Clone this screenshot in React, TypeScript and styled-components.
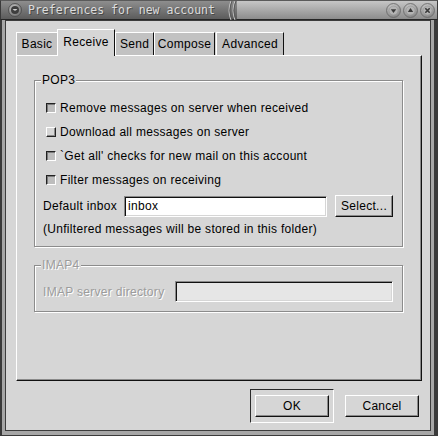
import React from 'react';
import styled, { createGlobalStyle } from 'styled-components';

const Global = createGlobalStyle`
  html, body { margin: 0; padding: 0; background: #d6d6d6; }
  body { font-family: "Liberation Sans", Arial, sans-serif; font-size: 12px; letter-spacing: 0.3px; color: #000; }
  * { box-sizing: border-box; }
`;

const Window = styled.div`
  width: 438px;
  height: 436px;
  display: flex;
  flex-direction: column;
  background: #a6a6a6;
`;

const TitleBar = styled.div`
  height: 20px;
  flex: none;
  display: flex;
  align-items: stretch;
  background: linear-gradient(#c6c6c6, #8c8c8c);
  border-top: 1px solid #5a5a5a;
  border-left: 1px solid #3a3a3a;
  border-right: 1px solid #3a3a3a;
  border-bottom: 1px solid #262626;
`;

const TitleTab = styled.div`
  width: 236px;
  flex: none;
  display: flex;
  align-items: center;
  gap: 6px;
  padding-left: 7px;
  background: linear-gradient(#8e8e8e, #5c5c5c);
`;

const TitleText = styled.span`
  flex: 1;
  font-family: "DejaVu Sans Mono", monospace;
  font-size: 11.5px;
  letter-spacing: 0;
  color: #dcdcdc;
  white-space: nowrap;
  text-shadow: 1px 1px 0 #4a4a4a;
`;

const TitleFill = styled.div`
  flex: 1;
`;

const TitleButtons = styled.div`
  display: flex;
  align-items: center;
  gap: 2px;
  padding-right: 2px;
`;

const Frame = styled.div`
  flex: 1;
  display: flex;
  flex-direction: column;
  border-left: 2px solid #3a3a3a;
  border-right: 4px solid #3a3a3a;
  border-bottom: 1px solid #3a3a3a;
  padding: 0 3px 4px 3px;
`;

const Content = styled.div`
  flex: 1;
  display: flex;
  flex-direction: column;
  background: #d6d6d6;
  border: 1px solid #3c3c3c;
  padding: 8px 8px 7px 10px;
`;

const Notebook = styled.div`
  height: 352px;
  display: flex;
  flex-direction: column;
`;

const TabRow = styled.div`
  height: 26px;
  display: flex;
  align-items: flex-end;
  position: relative;
  z-index: 1;
`;

const Tab = styled.div<{ $active?: boolean; $w: number; $gap?: number; $noRight?: boolean }>`
  width: ${p => p.$w}px;
  margin-left: ${p => p.$gap ?? 0}px;
  height: ${p => (p.$active ? 27 : 23)}px;
  margin-bottom: ${p => (p.$active ? -1 : 0)}px;
  display: flex;
  align-items: center;
  justify-content: center;
  padding-bottom: ${p => (p.$active ? 3 : 1)}px;
  background: ${p => (p.$active ? '#d6d6d6' : '#c2c2c2')};
  border-top: 1px solid #fff;
  border-left: 1px solid #fff;
  border-right: ${p => (p.$noRight ? 'none' : '1px solid #111')};
  white-space: nowrap;
`;

const Panel = styled.div`
  flex: 1;
  display: flex;
  flex-direction: column;
  border-top: 1px solid #fff;
  border-left: 1px solid #fff;
  border-right: 1px solid #111;
  border-bottom: 1px solid #111;
  box-shadow: inset -1px -1px 0 #8a8a8a;
  padding: 24px 18px 0 17px;
`;

const Group = styled.div<{ $h: number; $mt?: number }>`
  position: relative;
  height: ${p => p.$h}px;
  margin-top: ${p => p.$mt ?? 0}px;
  border: 1px solid #8c8c8c;
  box-shadow: inset 1px 1px 0 #fff, 1px 1px 0 #fff;
  display: flex;
  flex-direction: column;
  padding: 15px 0 0 0;
`;

const GroupLabel = styled.span<{ $disabled?: boolean }>`
  position: absolute;
  left: 6px;
  top: -8px;
  line-height: 14px;
  padding: 0 1px;
  background: #d6d6d6;
  color: ${p => (p.$disabled ? '#9c9c9c' : '#000')};
  text-shadow: ${p => (p.$disabled ? '1px 1px 0 #fff' : 'none')};
`;

const CheckRow = styled.label`
  height: 24px;
  display: flex;
  align-items: center;
  gap: 4px;
  padding-left: 11px;
`;

const Check = styled.span<{ $on: boolean }>`
  width: 10px;
  height: 10px;
  flex: none;
  background: ${p => (p.$on ? '#bdbdbd' : '#d6d6d6')};
  border: 1px solid;
  border-color: ${p => (p.$on ? '#222 #fff #fff #222' : '#fff #222 #222 #fff')};
  box-shadow: ${p => (p.$on ? 'inset 1px 1px 0 #7a7a7a' : 'inset -1px -1px 0 #8a8a8a')};
`;

const FieldRow = styled.div<{ $mt?: number }>`
  display: flex;
  align-items: center;
  padding-left: 8px;
  margin-top: ${p => p.$mt ?? 0}px;
`;

const FieldLabel = styled.span<{ $w: number; $disabled?: boolean }>`
  width: ${p => p.$w}px;
  flex: none;
  color: ${p => (p.$disabled ? '#9c9c9c' : '#000')};
  text-shadow: ${p => (p.$disabled ? '1px 1px 0 #fff' : 'none')};
`;

const Entry = styled.div<{ $w: number; $disabled?: boolean }>`
  width: ${p => p.$w}px;
  height: 21px;
  flex: none;
  display: flex;
  align-items: center;
  padding-left: 3px;
  background: ${p => (p.$disabled ? '#e6e6e6' : '#fff')};
  border: 1px solid;
  border-color: #8a8a8a #fff #fff #8a8a8a;
  box-shadow: inset 1px 1px 0 #111, inset -1px -1px 0 #d6d6d6;
`;

const Note = styled.div`
  margin-top: 5px;
  padding-left: 8px;
  line-height: 14px;
`;

const Button = styled.div<{ $w: number; $ml?: number }>`
  width: ${p => p.$w}px;
  height: 22px;
  margin-left: ${p => p.$ml ?? 0}px;
  flex: none;
  display: flex;
  align-items: center;
  justify-content: center;
  background: #d6d6d6;
  border: 1px solid;
  border-color: #fff #111 #111 #fff;
  box-shadow: inset -1px -1px 0 #8a8a8a;
`;

const ButtonRow = styled.div`
  height: 34px;
  margin-top: 8px;
  display: flex;
  align-items: center;
  justify-content: flex-end;
  gap: 11px;
  padding-right: 3px;
`;

const DefaultFrame = styled.div`
  width: 84px;
  height: 34px;
  padding: 5px 4px;
  border: 1px solid;
  border-color: #2a2a2a #fff #fff #2a2a2a;
`;

const WinIcon = () => (
  <svg width="14" height="14" viewBox="0 0 14 14">
    <defs>
      <radialGradient id="wi" cx="0.4" cy="0.35" r="0.7">
        <stop offset="0" stopColor="#c8c8c8" />
        <stop offset="1" stopColor="#6e6e6e" />
      </radialGradient>
    </defs>
    <circle cx="7" cy="7" r="6.5" fill="url(#wi)" stroke="#4a4a4a" strokeWidth="0.8" />
    <circle cx="7" cy="7" r="4" fill="#3e3e3e" />
    <path d="M4.6 6 Q7 9.6 9.4 6 Z" fill="#cfcfcf" />
  </svg>
);

const Ball = ({ kind }: { kind: 'min' | 'max' | 'close' }) => (
  <svg width="15" height="15" viewBox="0 0 15 15">
    <defs>
      <radialGradient id={`b-${kind}`} cx="0.45" cy="0.35" r="0.7">
        <stop offset="0" stopColor="#e4e4e4" />
        <stop offset="1" stopColor="#7a7a7a" />
      </radialGradient>
    </defs>
    <circle cx="7.5" cy="7.5" r="7" fill={`url(#b-${kind})`} stroke="#6a6a6a" strokeWidth="0.8" />
    <circle cx="7.5" cy="7.5" r="4.6" fill="#b4b4b4" stroke="#8a8a8a" strokeWidth="0.6" />
    {kind === 'min' && <path d="M4.8 6.2 L10.2 6.2 L7.5 10 Z" fill="#3a3a3a" />}
    {kind === 'max' && <path d="M4.8 9 L10.2 9 L7.5 5.1 Z" fill="#3a3a3a" />}
    {kind === 'close' && (
      <path d="M5.3 5.3 L9.7 9.7 M9.7 5.3 L5.3 9.7" stroke="#3a3a3a" strokeWidth="1.6" />
    )}
  </svg>
);

const Arcs = () => (
  <svg width="10" height="19" viewBox="0 0 10 19">
    <path d="M4 0 Q0 9.5 4 19" stroke="#c8c8c8" strokeWidth="1" fill="none" />
    <path d="M8 0 Q4 9.5 8 19" stroke="#c8c8c8" strokeWidth="1" fill="none" />
    <path d="M5 0 Q1 9.5 5 19" stroke="#5a5a5a" strokeWidth="1" fill="none" />
    <path d="M9 0 Q5 9.5 9 19" stroke="#5a5a5a" strokeWidth="1" fill="none" />
  </svg>
);

const tabs = [
  { label: 'Basic', w: 41, noRight: true },
  { label: 'Receive', w: 58, active: true },
  { label: 'Send', w: 39 },
  { label: 'Compose', w: 61 },
  { label: 'Advanced', w: 68, gap: 1 },
];

const checks = [
  { label: 'Remove messages on server when received', on: true },
  { label: 'Download all messages on server', on: false },
  { label: "`Get all' checks for new mail on this account", on: true },
  { label: 'Filter messages on receiving', on: true },
];

export default function App() {
  return (
    <>
      <Global />
      <Window>
        <TitleBar>
          <TitleTab>
            <WinIcon />
            <TitleText>Preferences for new account</TitleText>
            <Arcs />
          </TitleTab>
          <TitleFill />
          <TitleButtons>
            <Ball kind="min" />
            <Ball kind="max" />
            <Ball kind="close" />
          </TitleButtons>
        </TitleBar>
        <Frame>
          <Content>
            <Notebook>
              <TabRow>
                {tabs.map(t => (
                  <Tab key={t.label} $w={t.w} $active={t.active} $gap={t.gap} $noRight={t.noRight}>
                    {t.label}
                  </Tab>
                ))}
              </TabRow>
              <Panel>
                <Group $h={167}>
                  <GroupLabel>POP3</GroupLabel>
                  {checks.map(c => (
                    <CheckRow key={c.label}>
                      <Check $on={c.on} />
                      {c.label}
                    </CheckRow>
                  ))}
                  <FieldRow $mt={3}>
                    <FieldLabel $w={81}>Default inbox</FieldLabel>
                    <Entry $w={203}>inbox</Entry>
                    <Button $w={58} $ml={8}>Select...</Button>
                  </FieldRow>
                  <Note>(Unfiltered messages will be stored in this folder)</Note>
                </Group>
                <Group $h={47} $mt={18}>
                  <GroupLabel $disabled>IMAP4</GroupLabel>
                  <FieldRow>
                    <FieldLabel $w={132} $disabled>IMAP server directory</FieldLabel>
                    <Entry $w={218} $disabled />
                  </FieldRow>
                </Group>
              </Panel>
            </Notebook>
            <ButtonRow>
              <DefaultFrame>
                <Button $w={74}>OK</Button>
              </DefaultFrame>
              <Button $w={74}>Cancel</Button>
            </ButtonRow>
          </Content>
        </Frame>
      </Window>
    </>
  );
}
